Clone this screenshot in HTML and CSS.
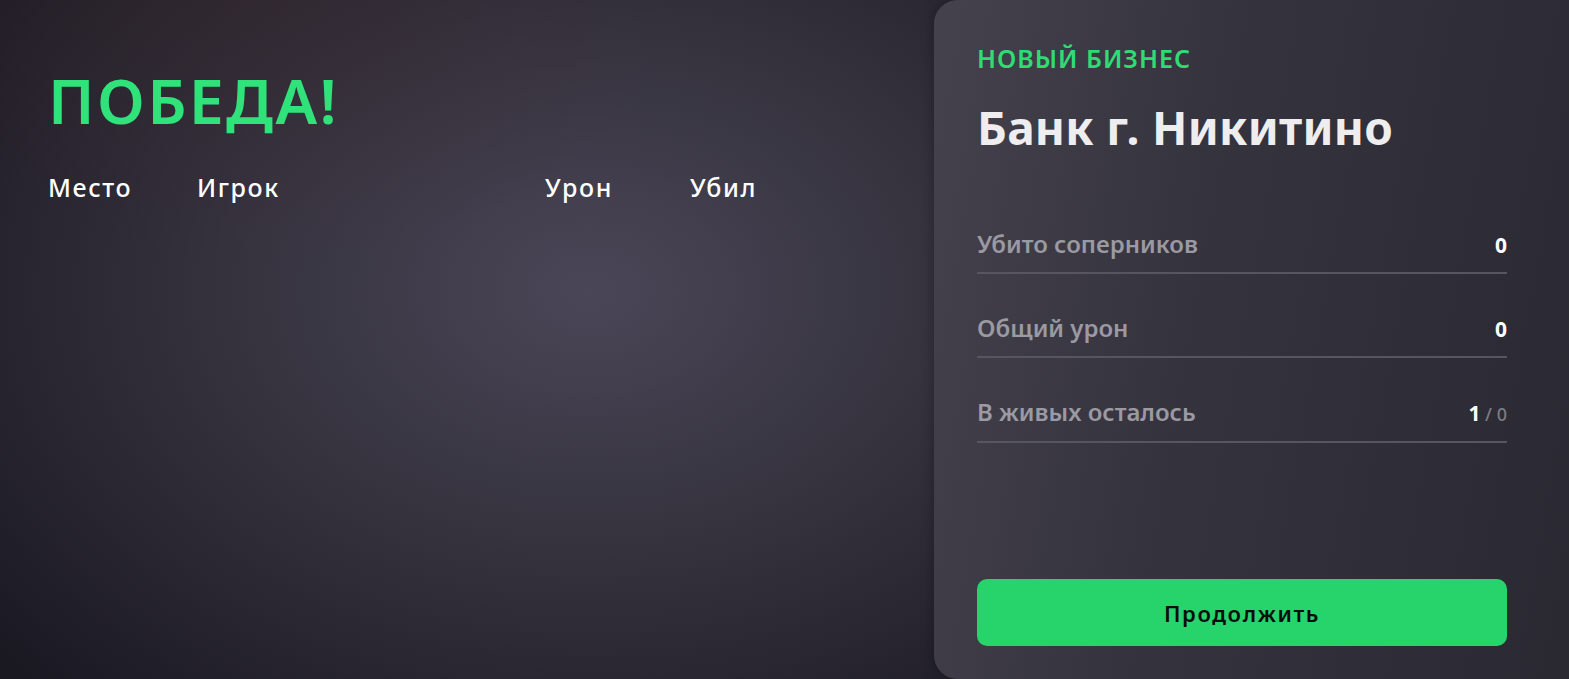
FILE: index.html
```html
<!DOCTYPE html>
<html lang="ru">
<head>
  <meta charset="UTF-8" />
  <title>Победа</title>
  <link rel="stylesheet" href="styles.css">
</head>
<body>
  <div class="pantalla">
    <!-- Tabla de resultados -->
    <main class="resultados">
      <h1 class="titulo">ПОБЕДА!</h1>
      <div class="tabla-cabecera">
        <span class="col-lugar">Место</span>
        <span class="col-jugador">Игрок</span>
        <span class="col-dano">Урон</span>
        <span class="col-mato">Убил</span>
      </div>
    </main>

    <!-- Panel lateral -->
    <aside class="panel">
      <div class="etiqueta">НОВЫЙ БИЗНЕС</div>
      <h2 class="negocio">Банк г. Никитино</h2>

      <div class="stats">
        <div class="stat">
          <span class="stat-nombre">Убито соперников</span>
          <span class="stat-valor">0</span>
        </div>
        <div class="stat">
          <span class="stat-nombre">Общий урон</span>
          <span class="stat-valor">0</span>
        </div>
        <div class="stat">
          <span class="stat-nombre">В живых осталось</span>
          <span class="stat-valor">1<span class="total"> / 0</span></span>
        </div>
      </div>

      <button class="continuar">Продолжить</button>
    </aside>
  </div>
</body>
</html>
```

FILE: styles.css
```css
* {
  box-sizing: border-box;
}

body {
  margin: 0;
  font-family: "Noto Sans", Arial, sans-serif;
  background:
    radial-gradient(ellipse 420px 260px at 250px 0px, rgba(60, 40, 45, 0.35), transparent),
    radial-gradient(ellipse 780px 560px at 590px 290px, #4a4657 0%, #36333f 45%, #1a1821 100%);
  background-color: #1a1821;
  height: 100vh;
  overflow: hidden;
  color: #fff;
}

.pantalla {
  display: flex;
  height: 100vh;
}

.resultados {
  flex: 1;
  padding: 64px 0 0 48px;
}

.titulo {
  margin: 0;
  font-size: 62px;
  font-weight: 600;
  line-height: 72px;
  color: #2fe27a;
  letter-spacing: 2.4px;
}

.tabla-cabecera {
  display: grid;
  grid-template-columns: 149px 348px 145px 100px;
  margin-top: 36px;
  font-size: 25px;
  font-weight: 500;
  line-height: 30px;
  letter-spacing: 1.6px;
}

.panel {
  width: 635px;
  flex-shrink: 0;
  display: flex;
  flex-direction: column;
  padding: 43px 62px 33px 43px;
  border-radius: 24px 0 0 24px;
  background: linear-gradient(100deg, #45424e 0%, #35333d 40%, #2a2831 100%);
  box-shadow: -2px 0 12px rgba(0, 0, 0, 0.25);
}

.etiqueta {
  font-size: 25px;
  font-weight: 600;
  line-height: 30px;
  color: #2fdc73;
  letter-spacing: 1px;
}

.negocio {
  margin: 24px 0 0;
  font-size: 46px;
  font-weight: 700;
  line-height: 60px;
  color: #eeedf0;
  letter-spacing: 0.3px;
}

.stats {
  margin-top: 33px;
}

.stat {
  display: flex;
  justify-content: space-between;
  align-items: baseline;
  padding: 39px 0 12px;
  border-bottom: 2px solid #57555e;
  line-height: 30px;
}

.stat-nombre {
  font-size: 24px;
  font-weight: 600;
  color: #9b99a2;
}

.stat-valor {
  font-size: 21px;
  font-weight: 700;
  color: #fff;
}

.total {
  font-size: 18px;
  font-weight: 500;
  color: #7d7b84;
}

.continuar {
  margin-top: auto;
  height: 67px;
  border: none;
  border-radius: 10px;
  background-color: #27d46c;
  color: #0d0d0d;
  font-family: "Noto Sans", Arial, sans-serif;
  font-size: 22px;
  font-weight: 600;
  letter-spacing: 1.6px;
  cursor: pointer;
}
```
